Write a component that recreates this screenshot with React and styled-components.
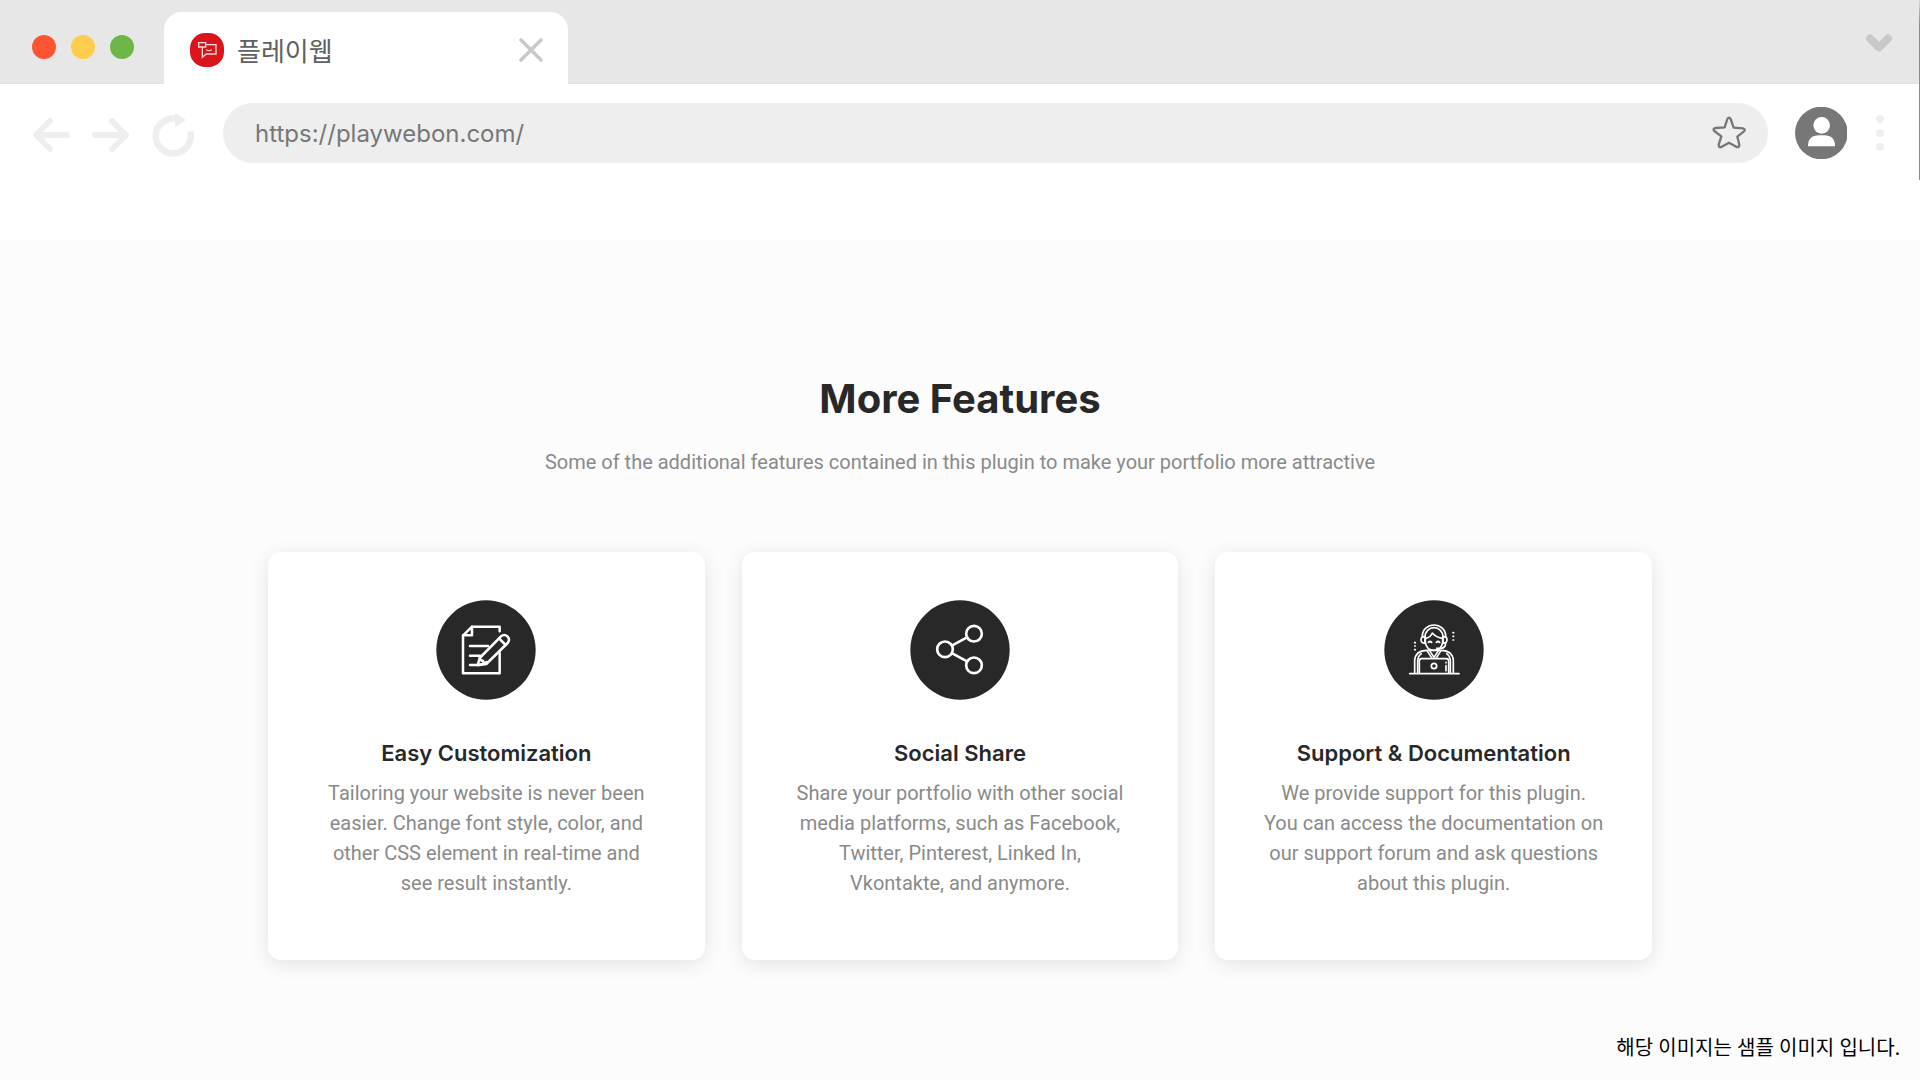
import styled, { createGlobalStyle } from "styled-components";

const colors = {
  white: "#ffffff",
  page: "#fcfcfc",
  strip: "#e7e7e7",
  field: "#eeeeee",
  icon: "#777777",
  mute: "#c9c9c9",
  dark: "#282828",
  text: "#8a8a8a",
};

const GlobalStyle = createGlobalStyle`
  * {
    box-sizing: border-box;
  }
  body {
    margin: 0;
    background: ${colors.page};
    font-family: Roboto, "Noto Sans CJK KR", sans-serif;
  }
  button {
    display: flex;
    padding: 0;
    border: 0;
    background: transparent;
    cursor: pointer;
  }
  svg {
    display: block;
    flex: none;
  }
`;

const Window = styled.div`
  position: relative;
  display: flex;
  flex-direction: column;
  min-height: 100vh;
  &::after {
    content: "";
    position: absolute;
    top: 0;
    right: 0;
    width: 1px;
    height: 180px;
    background: linear-gradient(#d8d8d8, #8c8c8c 24px);
  }
`;
const TabStrip = styled.div`
  display: flex;
  align-items: flex-end;
  height: 84px;
  padding: 0 27px 0 32px;
  background: ${colors.strip};
  border-bottom: 1px solid #e2e2e2;
`;
const Lights = styled.div`
  display: flex;
  gap: 15px;
  width: 132px;
  margin-bottom: 24px;
`;
const Light = styled.button`
  width: 24px;
  height: 24px;
  border-radius: 50%;
  && {
    background: ${(props) => props.$color};
  }
`;
const Tab = styled.div`
  display: flex;
  align-items: center;
  width: 404px;
  height: 72px;
  margin-bottom: -1px;
  padding: 4px 25px 0 26px;
  border-radius: 18px 18px 0 0;
  background: ${colors.white};
`;
const TabTitle = styled.span`
  flex: 1;
  margin-left: 13px;
  color: #606060;
  font-family: "Noto Sans CJK KR", sans-serif;
  font-size: 26px;
  font-weight: 400;
  line-height: 36px;
`;
const TabMenu = styled.button`
  && {
    margin: 0 0 30px auto;
  }
`;
const Toolbar = styled.div`
  display: flex;
  align-items: center;
  height: 156px;
  padding: 0 36px 58px 32px;
  background: ${colors.white};
`;
const NavButtons = styled.div`
  display: flex;
  align-items: center;
  gap: 22px;
  width: 191px;
  padding-top: 4px;
`;
const AddressBar = styled.form`
  display: flex;
  flex: 1;
  align-items: center;
  height: 60px;
  padding: 0 22px 0 32px;
  border-radius: 30px;
  background: ${colors.field};
`;
const Address = styled.input`
  flex: 1;
  padding: 0;
  border: 0;
  outline: 0;
  background: transparent;
  color: ${colors.icon};
  font-family: Inter, sans-serif;
  font-size: 24px;
  font-weight: 400;
`;
const Actions = styled.div`
  display: flex;
  align-items: center;
  gap: 29px;
  margin-left: 27px;
`;
const Content = styled.main`
  display: flex;
  flex: 1;
  flex-direction: column;
  align-items: center;
  padding-top: 134px;
  text-align: center;
  background: ${colors.page};
`;
const Heading = styled.h1`
  margin: 0;
  color: ${colors.dark};
  font-family: Inter, sans-serif;
  font-size: 40px;
  font-weight: 700;
  line-height: 50px;
`;
const Lead = styled.p`
  margin: 23px 0 0;
  color: ${colors.text};
  font-size: 20px;
  line-height: 30px;
`;
const Cards = styled.section`
  display: grid;
  grid-template-columns: repeat(3, 1fr);
  gap: 37px;
  width: 1384px;
  max-width: 92%;
  margin-top: 75px;
`;
const Card = styled.article`
  display: flex;
  flex-direction: column;
  align-items: center;
  padding: 48px 24px 62px;
  border-radius: 13px;
  background: ${colors.white};
  box-shadow: 0 4px 20px rgba(0, 0, 0, 0.1);
`;
const CardTitle = styled.h2`
  margin: 38px 0 10px;
  color: ${colors.dark};
  font-family: Inter, sans-serif;
  font-size: 22px;
  font-weight: 600;
  line-height: 30px;
`;
const CardText = styled.p`
  margin: 0;
  color: ${colors.text};
  font-size: 20px;
  line-height: 30px;
  white-space: pre-line;
`;
const Notice = styled.footer`
  margin: auto 20px 14px auto;
  padding-top: 20px;
  color: #000000;
  font-family: "Noto Sans", "Noto Sans CJK KR", sans-serif;
  font-size: 20px;
  line-height: 36px;
`;

const Favicon = () => (
  <svg width="34" height="34" viewBox="0 0 102 102" fill="none">
    <rect width="102" height="102" rx="46" fill="#d9141b" />
    <g stroke="#fbd9da" strokeWidth="4">
      <path d="M26 29h21v13H26z" />
      <path d="M47 35h31v28H49L37 73V42" />
      <path d="M49 50q8 6 16 0" />
    </g>
  </svg>
);

const CloseIcon = () => (
  <svg width="24" height="24" viewBox="0 0 24 24">
    <path
      d="M2 2l20 20M22 2L2 22"
      stroke={colors.mute}
      strokeWidth="3.6"
      strokeLinecap="round"
    />
  </svg>
);

const ChevronIcon = () => (
  <svg width="28" height="20" viewBox="0 0 28 20" fill="none">
    <path
      d="M5 5.500l9 9 9-9"
      stroke={colors.mute}
      strokeWidth="8"
      strokeLinecap="round"
      strokeLinejoin="round"
    />
  </svg>
);

const ArrowIcon = ({ forward }) => (
  <svg width="38" height="36" viewBox="0 0 38 36" fill="none">
    <path
      d={forward ? "M3 18h31M20 4l14 14-14 14" : "M35 18H4M18 4L4 18l14 14"}
      stroke={colors.field}
      strokeWidth="6"
      strokeLinecap="round"
      strokeLinejoin="round"
    />
  </svg>
);

const ReloadIcon = () => (
  <svg width="42" height="44" viewBox="0 0 42 44" fill="none">
    <path
      d="M38.200 18.500A17.500 17.500 0 1 1 23 5.500"
      stroke={colors.field}
      strokeWidth="6.500"
    />
    <path d="M23 0l11 7-11 7z" fill={colors.field} />
  </svg>
);

const StarIcon = () => (
  <svg width="34" height="34" viewBox="274 348 102 102" fill="none">
    <path
      d="M320 357q5-8 10 0l9 26 27 2q10 2 4 9l-20 16 6 24q0 9-8 7l-23-13-23 13q-8 2-8-7l8-25-21-16q-6-7 4-9l27-2z"
      stroke={colors.icon}
      strokeWidth="7"
      strokeLinejoin="round"
    />
  </svg>
);

const AvatarIcon = () => (
  <svg width="52" height="52" viewBox="525 323 156 156">
    <circle cx="604" cy="401" r="79" fill={colors.icon} />
    <circle cx="605" cy="378" r="25" fill={colors.white} />
    <path d="M564 441q0-33 33-33h15q33 0 33 33z" fill={colors.white} />
  </svg>
);

const DotsIcon = () => (
  <svg width="8" height="36" viewBox="0 0 8 36" fill={colors.field}>
    <circle cx="4" cy="4" r="4" />
    <circle cx="4" cy="18" r="4" />
    <circle cx="4" cy="32" r="4" />
  </svg>
);

const RoundIcon = ({ children }) => (
  <svg
    width="100"
    height="100"
    viewBox="0 0 300 300"
    fill="none"
    stroke={colors.white}
    strokeLinecap="round"
    strokeLinejoin="round"
  >
    <circle cx="150" cy="150" r="149" fill={colors.dark} stroke="none" />
    {children}
  </svg>
);

const EditIcon = () => (
  <RoundIcon>
    <g strokeWidth="7.500">
      <path d="M191 94V80h-83L81 107v113h110v-61" />
      <path d="M108 80v26H81" />
      <path d="M102 138h54M102 167h30M102 195h20q16 0 30-9" />
      <path d="M131 174l64-65q10-8 20 1 8 9 0 19l-64 63-26 4z" />
      <path d="M189 115l20 20M131 174q3 9 10 8 0 9 10 6" />
    </g>
  </RoundIcon>
);

const ShareIcon = () => (
  <RoundIcon>
    <g strokeWidth="8">
      <circle cx="105" cy="148" r="23.500" />
      <circle cx="192" cy="101" r="23.500" />
      <circle cx="192" cy="196" r="23.500" />
      <path d="M127 136l44-24M127 160l44 24" />
    </g>
  </RoundIcon>
);

const SupportIcon = () => (
  <RoundIcon>
    <g strokeWidth="5">
      <path d="M115 110v-2a35 33 0 0 1 70 0v2" />
      <path d="M123 110a27 27 0 0 1 54 0" />
      <path d="M123 110q-12-1-12 9t12 11zM177 110q12-1 12 9t-12 11z" />
      <path d="M124 114v13q4 24 26 24t26-24v-13" />
      <path d="M125 115q15-3 20-16 12 14 31 16" />
      <path d="M133 127q5-5 10 0M157 127q5-5 10 0" />
      <path d="M185 130q-1 14-14 15h-13" />
      <path d="M92 219v-38q2-29 36-30h44q34 1 36 30v38" />
      <path d="M101 219v-37q1-14 11-21M199 219v-37q-1-14-11-21" />
      <path d="M129 152l15 23M171 152l-15 23M137 152l13 20 13-20" />
      <path d="M106 219v-36q0-7 7-7h74q7 0 7 7v36" />
      <circle cx="150" cy="198" r="8" />
      <path d="M186 197v15M186 187v1" />
      <path d="M77 221h148" />
      <path d="M92 128h2M92 138h2M92 149h2M207 98h2M207 109h2M207 120h2" />
    </g>
  </RoundIcon>
);

const features = [
  {
    title: "Easy Customization",
    Icon: EditIcon,
    text: "Tailoring your website is never been\neasier. Change font style, color, and\nother CSS element in real-time and\nsee result instantly.",
  },
  {
    title: "Social Share",
    Icon: ShareIcon,
    text: "Share your portfolio with other social\nmedia platforms, such as Facebook,\nTwitter, Pinterest, Linked In,\nVkontakte, and anymore.",
  },
  {
    title: "Support & Documentation",
    Icon: SupportIcon,
    text: "We provide support for this plugin.\nYou can access the documentation on\nour support forum and ask questions\nabout this plugin.",
  },
];

export default function App() {
  return (
    <>
      <GlobalStyle />
      <Window>
        <TabStrip>
          <Lights>
            <Light $color="#ff5432" aria-label="Close window" />
            <Light $color="#ffcd4b" aria-label="Minimize window" />
            <Light $color="#6fb648" aria-label="Maximize window" />
          </Lights>
          <Tab>
            <Favicon />
            <TabTitle>플레이웹</TabTitle>
            <button aria-label="Close tab">
              <CloseIcon />
            </button>
          </Tab>
          <TabMenu aria-label="Search tabs">
            <ChevronIcon />
          </TabMenu>
        </TabStrip>
        <Toolbar>
          <NavButtons>
            <button aria-label="Back">
              <ArrowIcon />
            </button>
            <button aria-label="Forward">
              <ArrowIcon forward />
            </button>
            <button aria-label="Reload">
              <ReloadIcon />
            </button>
          </NavButtons>
          <AddressBar onSubmit={(e) => e.preventDefault()}>
            <Address
              type="text"
              aria-label="Address"
              defaultValue="https://playwebon.com/"
            />
            <button type="button" aria-label="Bookmark">
              <StarIcon />
            </button>
          </AddressBar>
          <Actions>
            <button aria-label="Profile">
              <AvatarIcon />
            </button>
            <button aria-label="Menu">
              <DotsIcon />
            </button>
          </Actions>
        </Toolbar>
        <Content>
          <Heading>More Features</Heading>
          <Lead>
            Some of the additional features contained in this plugin to make
            your portfolio more attractive
          </Lead>
          <Cards>
            {features.map(({ title, Icon, text }) => (
              <Card key={title}>
                <Icon />
                <CardTitle>{title}</CardTitle>
                <CardText>{text}</CardText>
              </Card>
            ))}
          </Cards>
          <Notice>해당 이미지는 샘플 이미지 입니다.</Notice>
        </Content>
      </Window>
    </>
  );
}
